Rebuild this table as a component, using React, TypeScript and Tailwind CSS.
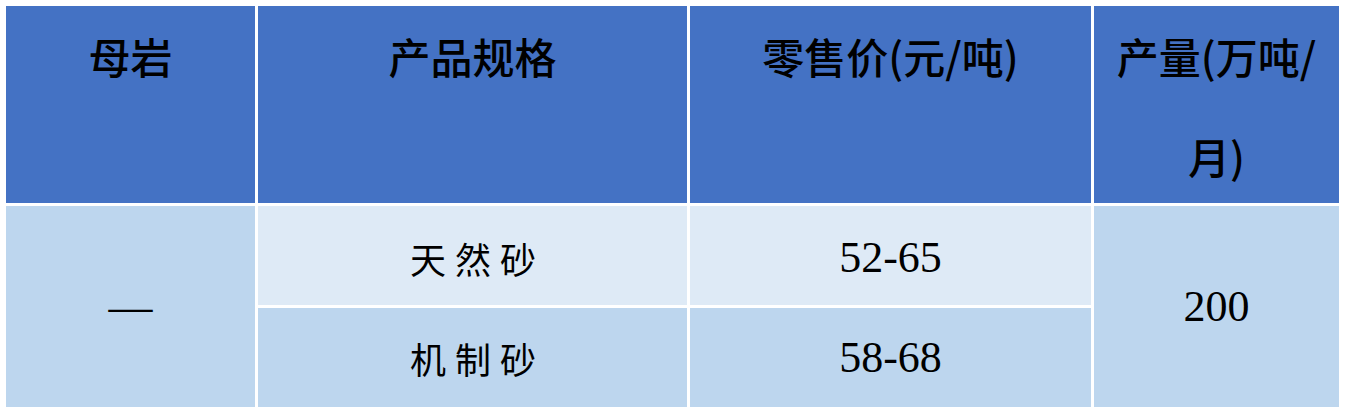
const headFont = "font-['Noto_Sans_CJK_SC','Noto_Sans',sans-serif]";
const numFont = "font-['Liberation_Serif','Noto_Sans_CJK_SC',serif]";

export default function App() {
  return (
    <div className="w-[1346px] h-[412px] bg-white pt-[6px] pl-[6px]">
      <div className="grid grid-cols-[249px_429px_401px_245px] grid-rows-[197px_99px_99px] gap-x-[3px] gap-y-[3px] text-black">
        {/* Header */}
        <div className={`bg-[#4472c4] text-center text-[42px] leading-[100px] font-medium ${headFont}`}>
          母岩
        </div>
        <div className={`bg-[#4472c4] text-center text-[42px] leading-[100px] font-medium ${headFont}`}>
          产品规格
        </div>
        <div className={`bg-[#4472c4] text-center text-[42px] leading-[100px] font-medium ${headFont}`}>
          零售价(元/吨)
        </div>
        <div className={`bg-[#4472c4] text-center text-[42px] leading-[100px] font-medium ${headFont}`}>
          产量(万吨/
          <br />
          月)
        </div>

        {/* Body */}
        <div className={`row-span-2 bg-[#bdd6ee] flex items-center justify-center text-[44px] ${numFont}`}>
          —
        </div>
        <div className={`bg-[#deeaf6] flex items-center justify-center pl-[10px] pt-[4px] text-[36px] tracking-[9px] ${headFont}`}>
          天然砂
        </div>
        <div className={`bg-[#deeaf6] flex items-center justify-center pt-[4px] text-[44px] ${numFont}`}>
          52-65
        </div>
        <div className={`row-span-2 bg-[#bdd6ee] flex items-center justify-center text-[44px] ${numFont}`}>
          200
        </div>
        <div className={`bg-[#bdd6ee] flex items-center justify-center pl-[10px] text-[36px] tracking-[9px] ${headFont}`}>
          机制砂
        </div>
        <div className={`bg-[#bdd6ee] flex items-center justify-center text-[44px] ${numFont}`}>
          58-68
        </div>
      </div>
    </div>
  );
}
